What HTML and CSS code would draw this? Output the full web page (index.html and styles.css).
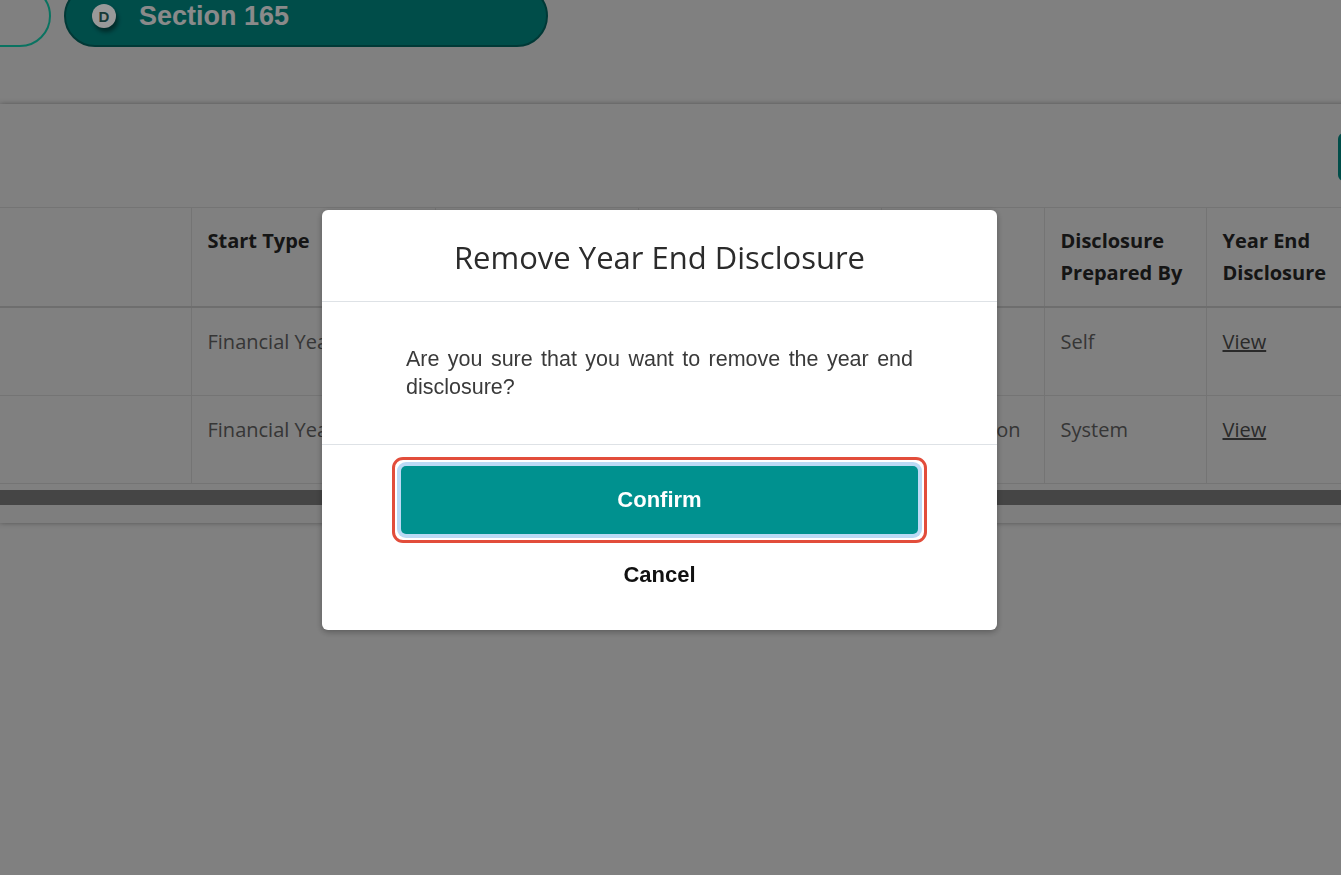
FILE: index.html
```html
<!DOCTYPE html>
<html>
	<head>
		<meta charset="utf-8">
		<meta name="viewport" content="width=device-width, initial-scale=1.0">
		<title>Year End Disclosure</title>
		<link rel="stylesheet" href="styles.css">
	</head>
	<body>
		<div class="topbar">
			<div class="tabs">
				<div class="tab tab-outline"></div>
				<div class="tab tab-active">
					<span class="tab-badge">D</span>
					<span class="tab-label">Section 165</span>
				</div>
			</div>
		</div>

		<div class="card">
			<div class="toolbar">
				<button class="add-btn"></button>
			</div>
			<table class="list">
				<colgroup>
					<col class="c1"><col class="c2"><col class="c3"><col class="c4"><col class="c5"><col class="c6"><col class="c7">
				</colgroup>
				<thead>
					<tr>
						<th></th>
						<th>Start Type</th>
						<th></th>
						<th></th>
						<th></th>
						<th>Disclosure Prepared By</th>
						<th>Year End Disclosure</th>
					</tr>
				</thead>
				<tbody>
					<tr class="row">
						<td></td>
						<td>Financial Year</td>
						<td></td>
						<td></td>
						<td></td>
						<td>Self</td>
						<td><a href="#">View</a></td>
					</tr>
					<tr class="row">
						<td></td>
						<td>Financial Year</td>
						<td></td>
						<td></td>
						<td>Confirmation</td>
						<td>System</td>
						<td><a href="#">View</a></td>
					</tr>
				</tbody>
			</table>
			<div class="hscroll">
				<div class="hscroll-thumb"></div>
			</div>
		</div>

		<div class="modal-layer">
			<div class="modal">
				<div class="modal-header">
					<h2>Remove Year End Disclosure</h2>
				</div>
				<div class="modal-body">
					<p>Are you sure that you want to remove the year end disclosure?</p>
				</div>
				<div class="modal-footer">
					<div class="focus-mark">
						<button class="btn-confirm">Confirm</button>
					</div>
					<button class="btn-cancel">Cancel</button>
				</div>
			</div>
		</div>
	</body>
</html>
```

FILE: styles.css
```css
	* {
		/* 清除默认内外边距 */
		padding: 0;
		margin: 0;
		box-sizing: border-box;
	}

	body {
		width: 100%;
		height: 100vh;
		background-color: #d5d5d5;
		font-family: "Open Sans", "Liberation Sans", sans-serif;
		overflow: hidden;
	}

	/* 顶部标签栏 标签上半部分被裁掉 */
	.topbar {
		display: flow-root;
		height: 104px;
	}
	.tabs {
		display: flex;
		gap: 13px;
		margin-top: -15px;
	}
	.tab {
		height: 62px;
		border-radius: 31px;
		flex-shrink: 0;
	}
	.tab-outline {
		width: 300px;
		margin-left: -249px;
		border: 2px solid #12c0a2;
	}
	.tab-active {
		width: 484px;
		display: flex;
		align-items: center;
		padding-left: 26px;
		background-color: #00807b;
		border: 2px solid #005f5b;
	}
	.tab-badge {
		width: 24px;
		height: 24px;
		border-radius: 50%;
		display: flex;
		justify-content: center;
		align-items: center;
		background-color: #fff;
		color: #2a5f5c;
		font: 700 15px "Liberation Sans", sans-serif;
		box-shadow: 2px 4px 4px rgba(0, 0, 0, 0.45);
	}
	.tab-label {
		margin-left: 23px;
		color: #e6e6e6;
		font: 700 27px "Liberation Sans", sans-serif;
	}

	/* 列表卡片 比视口宽 右侧按钮被裁掉 */
	.card {
		width: 1480px;
		background-color: #d5d5d5;
		box-shadow: 0 0 5px rgba(0, 0, 0, 0.35);
	}
	.toolbar {
		height: 103px;
		display: flex;
		justify-content: flex-end;
		padding: 29px 20px 0 0;
	}
	.add-btn {
		width: 122px;
		height: 48px;
		border: none;
		border-radius: 6px;
		background-color: #00807b;
	}

	.list {
		border-collapse: collapse;
		table-layout: fixed;
		width: 1380px;
		font-size: 20px;
		line-height: 32px;
	}
	.c1 { width: 191px; }
	.c2 { width: 244px; }
	.c3 { width: 203px; }
	.c4 { width: 243px; }
	.c5 { width: 163px; }
	.c6 { width: 162px; }
	.c7 { width: 174px; }

	.list th,
	.list td {
		border: 1px solid #c2c2c2;
		padding: 17px 16px;
		text-align: left;
		vertical-align: top;
		overflow: hidden;
	}
	.list th {
		font-weight: 700;
		color: #232323;
		border-bottom: 2px solid #b8b8b8;
	}
	.list td {
		padding-top: 18px;
		color: #5a5a5a;
	}
	.list th:first-child,
	.list td:first-child {
		border-left: none;
	}
	.list .row {
		height: 88px;
	}
	.list a {
		color: #474747;
	}

	/* 横向滚动条 */
	.hscroll {
		margin-top: 6px;
		height: 33px;
		background-color: #d2d2d2;
	}
	.hscroll-thumb {
		height: 15px;
		background-color: #737373;
	}

	/* 遮罩层 和 弹窗 */
	.modal-layer {
		position: fixed;
		top: 0;
		left: 0;
		right: 0;
		bottom: 0;
		background-color: rgba(0, 0, 0, 0.4);
		display: flex;
		justify-content: center;
		align-items: flex-start;
		padding: 210px 22px 0 0;
	}
	.modal {
		width: 675px;
		background-color: #fff;
		border-radius: 6px;
		box-shadow: 0 2px 6px rgba(0, 0, 0, 0.3);
	}
	.modal-header {
		height: 92px;
		display: flex;
		justify-content: center;
		align-items: center;
		border-bottom: 1px solid #dee2e6;
	}
	.modal-header h2 {
		font-size: 31px;
		font-weight: 400;
		color: #2b2b2b;
		padding-top: 3px;
	}
	.modal-body {
		padding: 43px 84px;
		border-bottom: 1px solid #dee2e6;
	}
	.modal-body p {
		font: 21.5px/28px "Liberation Sans", sans-serif;
		color: #3a3a3a;
		/* 两端对齐 */
		text-align: justify;
	}
	.modal-footer {
		display: flex;
		flex-direction: column;
		gap: 18px;
		padding: 12px 70px 41px;
	}
	.focus-mark {
		/* 红色标注框 */
		border: 3px solid #e24d3b;
		border-radius: 11px;
		padding: 6px;
	}
	.btn-confirm {
		display: block;
		width: 100%;
		height: 68px;
		border: none;
		border-radius: 5px;
		background-color: #00918f;
		color: #fff;
		font: 700 22px "Liberation Sans", sans-serif;
		box-shadow: 0 0 0 4px #bcdaf5;
		cursor: pointer;
	}
	.btn-cancel {
		border: none;
		background: none;
		font: 700 22px/28px "Liberation Sans", sans-serif;
		color: #111;
		cursor: pointer;
	}
```
